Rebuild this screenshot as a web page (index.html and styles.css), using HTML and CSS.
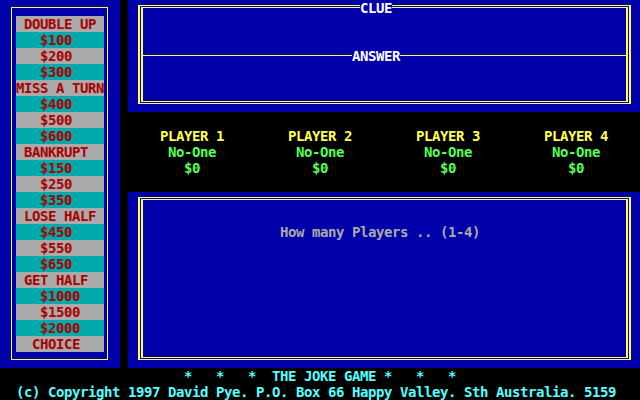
FILE: index.html
```html
<!DOCTYPE html>
<html>
<head>
<meta charset="utf-8">
<title>The Joke Game</title>
<link rel="stylesheet" href="styles.css">
</head>
<body>
<div class="screen">
  <div class="wheel">
    <div class="wheel-frame">
      <div class="wheel-item"> DOUBLE UP</div>
      <div class="wheel-item">   $100</div>
      <div class="wheel-item">   $200</div>
      <div class="wheel-item">   $300</div>
      <div class="wheel-item">MISS A TURN</div>
      <div class="wheel-item">   $400</div>
      <div class="wheel-item">   $500</div>
      <div class="wheel-item">   $600</div>
      <div class="wheel-item"> BANKRUPT</div>
      <div class="wheel-item">   $150</div>
      <div class="wheel-item">   $250</div>
      <div class="wheel-item">   $350</div>
      <div class="wheel-item"> LOSE HALF</div>
      <div class="wheel-item">   $450</div>
      <div class="wheel-item">   $550</div>
      <div class="wheel-item">   $650</div>
      <div class="wheel-item"> GET HALF</div>
      <div class="wheel-item">   $1000</div>
      <div class="wheel-item">   $1500</div>
      <div class="wheel-item">   $2000</div>
      <div class="wheel-item">  CHOICE</div>
    </div>
  </div>

  <div class="main">
    <div class="clue-box">
      <div class="frame-outer">
        <div class="frame-inner">
          <div class="clue-area"></div>
          <div class="answer-area"></div>
        </div>
      </div>
      <span class="frame-label label-clue">CLUE</span>
      <span class="frame-label label-answer">ANSWER</span>
    </div>

    <div class="players">
      <div class="player">
        <div class="player-name">PLAYER 1</div>
        <div class="player-info">No-One</div>
        <div class="player-info">$0</div>
      </div>
      <div class="player">
        <div class="player-name">PLAYER 2</div>
        <div class="player-info">No-One</div>
        <div class="player-info">$0</div>
      </div>
      <div class="player">
        <div class="player-name">PLAYER 3</div>
        <div class="player-info">No-One</div>
        <div class="player-info">$0</div>
      </div>
      <div class="player">
        <div class="player-name">PLAYER 4</div>
        <div class="player-info">No-One</div>
        <div class="player-info">$0</div>
      </div>
    </div>

    <div class="board-box">
      <div class="frame-outer">
        <div class="frame-inner board-inner">
          <div class="message">How many Players .. (1-4)</div>
        </div>
      </div>
    </div>
  </div>

  <div class="footer">
    <div class="footer-title">*   *   *  THE JOKE GAME *   *   *</div>
    <div class="footer-copy">(c) Copyright 1997 David Pye. P.O. Box 66 Happy Valley. Sth Australia. 5159</div>
  </div>
</div>
</body>
</html>
```
FILE: styles.css
```css
* {
  box-sizing: border-box;
  margin: 0;
  padding: 0;
}

body {
  width: 640px;
  height: 400px;
  overflow: hidden;
  background: #000000;
  font-family: "DejaVu Sans Mono", "Liberation Mono", monospace;
  font-weight: bold;
  font-size: 14px;
  letter-spacing: -0.43px;
  line-height: 16px;
}

.screen {
  display: grid;
  grid-template-columns: 120px 512px;
  grid-template-rows: 368px 32px;
  column-gap: 8px;
}

/* Left prize wheel */
.wheel {
  background: #0000aa;
  padding: 7px 12px 8px 11px;
}

.wheel-frame {
  height: 100%;
  border: 1px solid #ffff55;
  padding: 8px 3px 7px 4px;
}

.wheel-item {
  height: 16px;
  white-space: pre;
  color: #aa0000;
  background: #00aaaa;
}

.wheel-item:nth-child(odd) {
  background: #aaaaaa;
}

/* Right column */
.main {
  display: flex;
  flex-direction: column;
}

.clue-box {
  position: relative;
  height: 112px;
  background: #0000aa;
  padding: 5px 9px 8px 10px;
}

.frame-outer {
  height: 100%;
  border-style: solid;
  border-color: #ffff55;
  border-width: 1px 2px;
  padding: 1px;
}

.frame-inner {
  height: 100%;
  border-style: solid;
  border-color: #ffff55;
  border-width: 1px 2px;
  display: flex;
  flex-direction: column;
}

.clue-area {
  height: 48px;
  border-bottom: 1px solid #ffff55;
}

.answer-area {
  flex: 1;
}

.frame-label {
  position: absolute;
  top: 0;
  height: 16px;
  background: #0000aa;
  color: #ffffff;
  white-space: pre;
}

.label-clue {
  left: 232px;
}

.label-answer {
  left: 224px;
  top: 48px;
}

/* Players */
.players {
  height: 80px;
  padding: 16px 0;
  display: grid;
  grid-template-columns: repeat(4, 128px);
  text-align: center;
}

.player-name {
  color: #ffff55;
}

.player-info {
  color: #55ff55;
}

/* Board / message box */
.board-box {
  height: 176px;
  background: #0000aa;
  padding: 5px 9px 8px 10px;
}

.board-inner {
  padding: 24px 0 0 137px;
}

.message {
  color: #aaaaaa;
  white-space: pre;
}

/* Footer */
.footer {
  grid-column: 1 / -1;
  color: #55ffff;
}

.footer-title,
.footer-copy {
  height: 16px;
  white-space: pre;
}

.footer-title {
  padding-left: 184px;
}

.footer-copy {
  padding-left: 16px;
}
```
